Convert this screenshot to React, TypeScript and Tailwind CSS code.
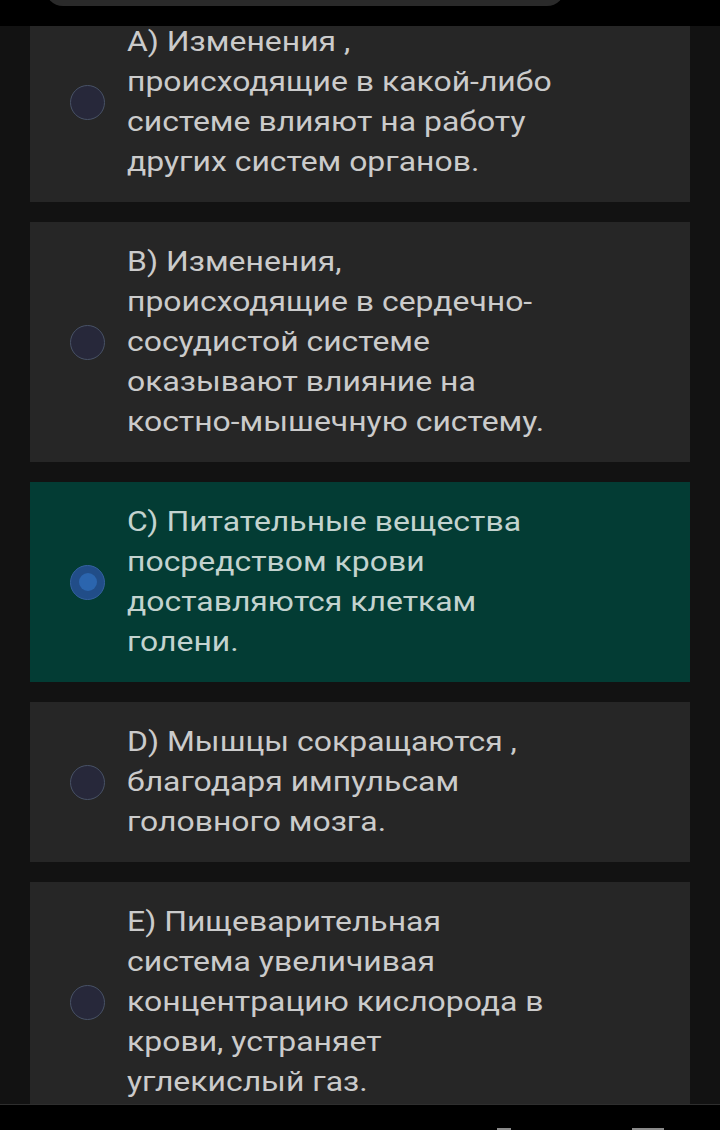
const options = [
  {
    id: "A",
    lines: [
      "А) Изменения ,",
      "происходящие в какой-либо",
      "системе влияют на работу",
      "других систем органов.",
    ],
  },
  {
    id: "B",
    lines: [
      "В) Изменения,",
      "происходящие в сердечно-",
      "сосудистой системе",
      "оказывают влияние на",
      "костно-мышечную систему.",
    ],
  },
  {
    id: "C",
    lines: [
      "С) Питательные вещества",
      "посредством крови",
      "доставляются клеткам",
      "голени.",
    ],
  },
  {
    id: "D",
    lines: ["D) Мышцы сокращаются ,", "благодаря импульсам", "головного мозга."],
  },
  {
    id: "E",
    lines: [
      "Е) Пищеварительная",
      "система увеличивая",
      "концентрацию кислорода в",
      "крови, устраняет",
      "углекислый газ.",
    ],
  },
];

const Radio = ({ checked }: { checked: boolean }) =>
  checked ? (
    <div className="w-[35px] h-[35px] shrink-0 rounded-full bg-[#214d88] border-[1.5px] border-[#3461a0] flex items-center justify-center">
      <div className="w-[18px] h-[18px] rounded-full bg-[#2b65ae]" />
    </div>
  ) : (
    <div className="w-[35px] h-[35px] shrink-0 rounded-full bg-[#27283a] border-[1.5px] border-[#485266]" />
  );

export default function App() {
  const selected = "C";

  return (
    <div
      className="relative w-[720px] h-[1130px] overflow-hidden bg-[#121212]"
      style={{ fontFamily: "Roboto, 'Noto Sans', sans-serif" }}
    >
      <div className="flex flex-col gap-5 px-[30px] pt-[2px]">
        {options.map((o) => {
          const isOn = o.id === selected;
          return (
            <div
              key={o.id}
              className={`flex items-center gap-[22px] pl-10 py-5 ${
                isOn ? "bg-[#033c34]" : "bg-[#262626]"
              }`}
            >
              <Radio checked={isOn} />
              {/* glyphs in the shot are wider than Roboto, so stretch them */}
              <p
                className={`origin-left scale-x-[1.14] whitespace-nowrap text-[28px] leading-[40px] ${
                  isOn ? "text-[#c3d3cf]" : "text-[#cbcbcb]"
                }`}
              >
                {o.lines.map((l, i) => (
                  <span key={i} className="block">
                    {l}
                  </span>
                ))}
              </p>
            </div>
          );
        })}
      </div>

      <div className="absolute top-0 left-0 w-full h-[26px] bg-black">
        <div className="absolute left-[45px] top-[-30px] w-[520px] h-[36px] rounded-b-[18px] bg-[#2a2a2a]" />
      </div>

      <div className="absolute left-0 top-[1104px] w-full h-[26px] bg-black border-t border-[#2e2e2e]">
        <div className="absolute left-[497px] bottom-0 w-[14px] h-[2px] bg-[#8a8a8a]" />
        <div className="absolute left-[632px] bottom-0 w-[32px] h-[2px] bg-[#8a8a8a]" />
      </div>
    </div>
  );
}
